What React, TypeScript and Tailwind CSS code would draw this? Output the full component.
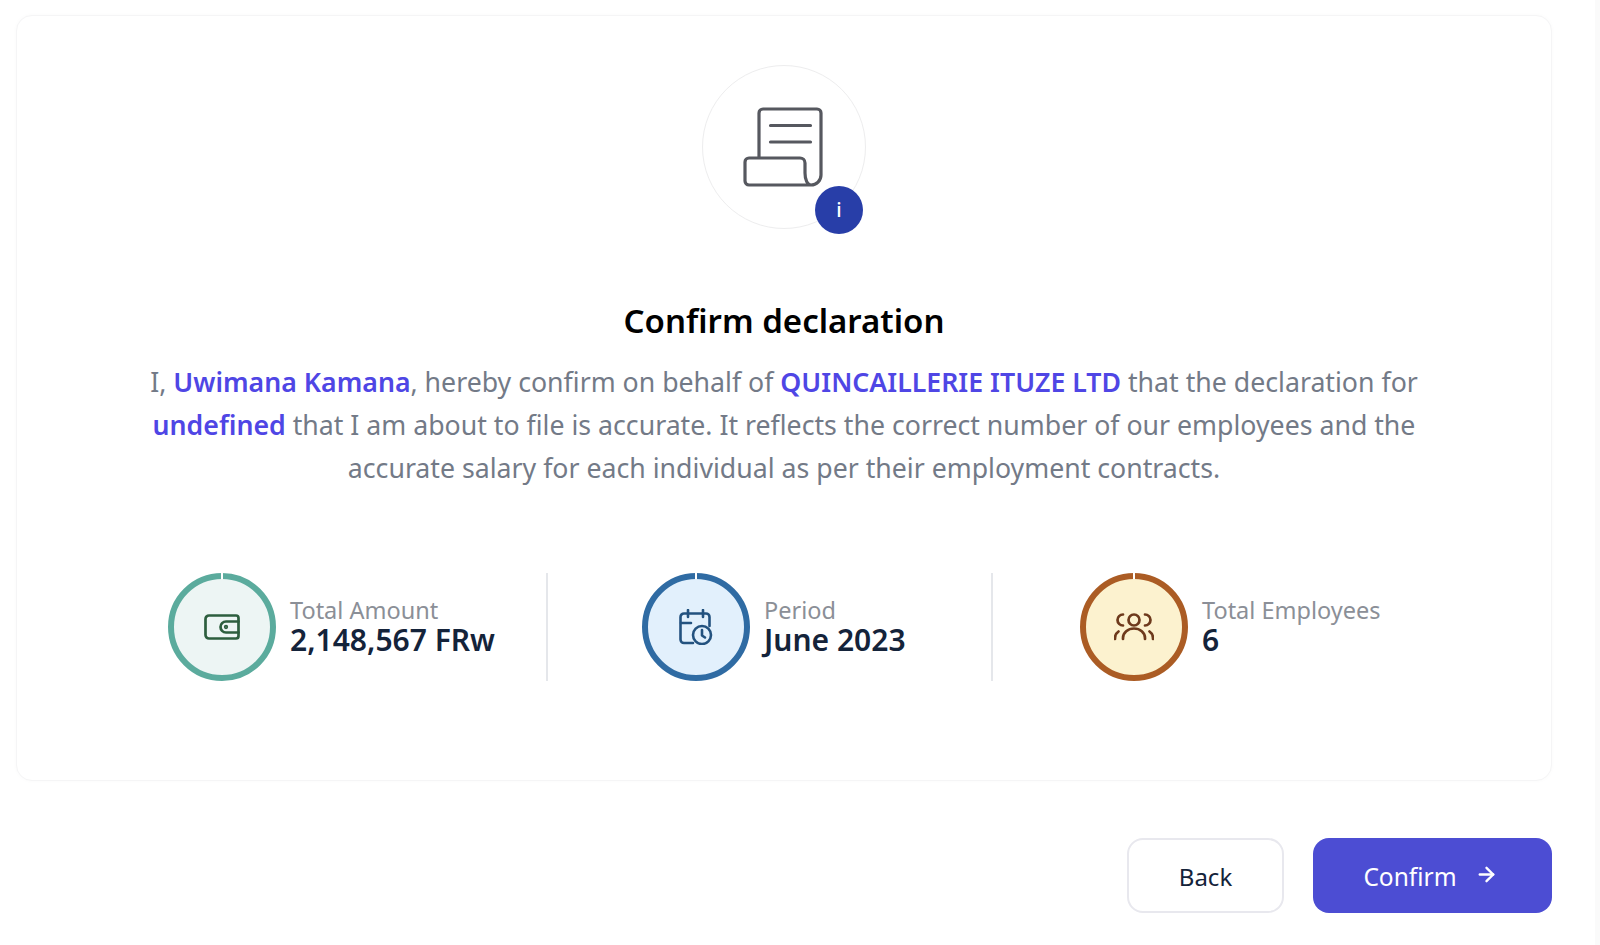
import { ArrowRight } from 'lucide-react'

const stats = [
  { label: 'Total Amount', value: '2,148,567 FRw', ring: 'border-[#5bab9d]', bg: 'bg-[#edf5f4]', width: 'w-[378px]', after: 'mr-[94px]', kind: 'wallet' },
  { label: 'Period', value: 'June 2023', ring: 'border-[#2f6ba3]', bg: 'bg-[#e2f0fc]', width: 'w-[349px]', after: 'mr-[87px]', kind: 'calendar' },
  { label: 'Total Employees', value: '6', ring: 'border-[#ab5c24]', bg: 'bg-[#fcf2cf]', width: 'w-auto', after: '', kind: 'people' },
]

function StatIcon({ kind }: { kind: string }) {
  if (kind === 'wallet') {
    return (
      <svg width="36" height="26" viewBox="0 0 36 26" fill="none" stroke="#2d5e3e" strokeWidth="2.7" strokeLinecap="round" strokeLinejoin="round">
        <path d="M5 1.500h27a2.500 2.500 0 0 1 2.500 2.500v18a2.500 2.500 0 0 1-2.500 2.500H5A3.500 3.500 0 0 1 1.500 21V5A3.500 3.500 0 0 1 5 1.500Z" />
        <path d="M34.500 7.500H22a5.500 5.500 0 0 0 0 11h12.500" />
        <circle cx="22" cy="13" r="0.8" fill="#2d5e3e" />
      </svg>
    )
  }
  if (kind === 'calendar') {
    return (
      <svg width="34" height="36" viewBox="0 0 34 36" fill="none" stroke="#23527f" strokeWidth="2.6" strokeLinecap="round" strokeLinejoin="round">
        <path d="M14 34H5a3.500 3.500 0 0 1-3.500-3.500V8A3.500 3.500 0 0 1 5 4.500h22A3.500 3.500 0 0 1 30.500 8v9" />
        <path d="M9 1v7M24 1v7M2 14h10" />
        <circle cx="23" cy="26" r="9" />
        <path d="M23 21v5.500l3 2" />
      </svg>
    )
  }
  return (
    <svg width="40" height="28" viewBox="0 0 40 28" fill="none" stroke="#6e3a1c" strokeWidth="2.7" strokeLinecap="round" strokeLinejoin="round">
      <circle cx="20" cy="7" r="5.500" />
      <path d="M9 1.500a5.500 5.500 0 0 0 0 11M31 1.500a5.500 5.500 0 0 1 0 11" />
      <path d="M9 26v-1a11 9.500 0 0 1 22 0v1" />
      <path d="M1 26v-1a8 8 0 0 1 3.500-6.500M39 26v-1a8 8 0 0 0-3.500-6.500" />
    </svg>
  )
}

export default function App() {
  return (
    <div className="flex h-[945px] overflow-hidden bg-white font-['Noto_Sans',sans-serif]">
      <div className="flex h-full w-[1595px] flex-col pl-4 pr-[43px] pt-[15px]">
        <div className="flex h-[766px] flex-col items-center rounded-2xl border border-[#f5f5f6] bg-white pt-[49px] shadow-[0_0_4px_rgba(0,0,0,0.025)]">
          <div className="relative flex size-[164px] shrink-0 items-center justify-center rounded-full border border-[#ededee]">
            <svg width="80" height="80" viewBox="0 0 80 80" fill="none" stroke="#56585f" strokeWidth="3.200" strokeLinecap="round" strokeLinejoin="round" className="-ml-0.5">
              <path d="M16 51V6a4 4 0 0 1 4-4h54a4 4 0 0 1 4 4v62a10 10 0 0 1-10 10c-3.500 0-6-5-6-12V56a5 5 0 0 0-5-5H6a4 4 0 0 0-4 4v19a4 4 0 0 0 4 4h62" />
              <path d="M27.500 18.500h40M27.500 35h40" />
            </svg>
            <div className="absolute left-[112px] top-[120px] flex size-12 items-center justify-center rounded-full bg-[#283ea8] text-xl font-medium leading-none text-white">
              i
            </div>
          </div>

          <h1 className="mt-[70px] text-[33px] font-semibold leading-[44px] text-black">Confirm declaration</h1>
          <p className="mt-[17px] w-[1300px] text-center text-[26.7px] leading-[43px] text-[#737a87]">
            I, <span className="font-semibold text-[#4f46e5]">Uwimana Kamana</span>, hereby confirm on behalf of{' '}
            <span className="font-semibold text-[#4f46e5]">QUINCAILLERIE ITUZE LTD</span> that the declaration for{' '}
            <span className="font-semibold text-[#4f46e5]">undefined</span> that I am about to file is accurate. It reflects the correct number of our employees and the accurate salary for each individual as per their employment contracts.
          </p>

          <div className="mt-[84px] flex w-full pl-[151px]">
            {stats.map((s, i) => (
              <div key={s.label} className="flex shrink-0">
                <div className={`flex shrink-0 ${s.width}`}>
                  <div className={`relative flex size-[108px] shrink-0 items-center justify-center rounded-full border-[6px] ${s.ring} ${s.bg}`}>
                    <div className="absolute -top-[6px] left-[47px] h-[6px] w-0.5 bg-white" />
                    <StatIcon kind={s.kind} />
                  </div>
                  <div className="ml-[14px] flex flex-col pt-[23px]">
                    <span className="text-[23.5px] leading-[28px] text-[#8b8f97]">{s.label}</span>
                    <span className="text-[30px] font-semibold leading-[32px] text-[#14233a]">{s.value}</span>
                  </div>
                </div>
                {i < 2 && <div className={`h-[108px] w-0.5 bg-[#e5e7eb] ${s.after}`} />}
              </div>
            ))}
          </div>
        </div>

        <div className="mt-[57px] flex justify-end gap-[29px]">
          <button className="h-[75px] w-[157px] rounded-2xl border-2 border-[#e8e8ee] bg-white pt-0.5 text-2xl text-[#14233a]">Back</button>
          <button className="flex h-[75px] w-[239px] items-center justify-center gap-[18px] rounded-2xl bg-[#4c4dd3] pr-1 text-[24.5px] text-white">
            <span className="pt-1">Confirm</span>
            <ArrowRight size={23} strokeWidth={2.5} className="-mt-0.5" />
          </button>
        </div>
      </div>
      <div className="h-full flex-1 bg-[#fafafa]" />
    </div>
  )
}
